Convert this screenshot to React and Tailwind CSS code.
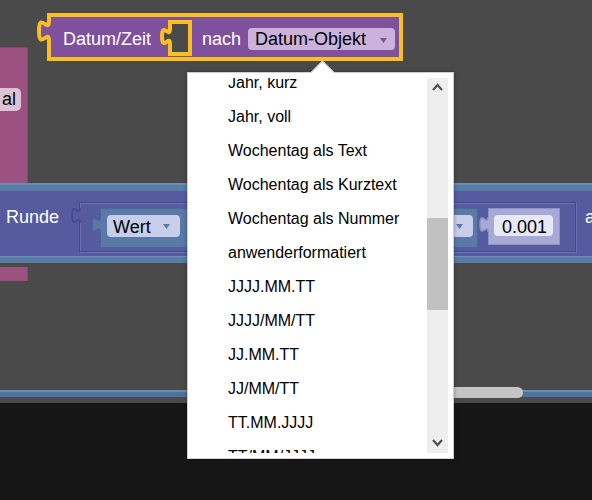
const Tri = ({ color, className = "" }) => (
  <svg className={className} width="7" height="5">
    <polygon points="0,0 7,0 3.5,5" fill={color} />
  </svg>
);

const Tab = ({ className, fill, stroke, sw = 1.5 }) => (
  <svg className={className} width="16" height="22">
    <path d="M12 3 c 0 10 -8 -8 -8 7.5 s 8 -2.5 8 7.5 H15 V3 Z" fill={fill} />
    <path d="M12 3 c 0 10 -8 -8 -8 7.5 s 8 -2.5 8 7.5" fill="none" stroke={stroke} strokeWidth={sw} />
  </svg>
);

export default function App() {
  const items = [
    "Jahr, kurz",
    "Jahr, voll",
    "Wochentag als Text",
    "Wochentag als Kurztext",
    "Wochentag als Nummer",
    "anwenderformatiert",
    "JJJJ.MM.TT",
    "JJJJ/MM/TT",
    "JJ.MM.TT",
    "JJ/MM/TT",
    "TT.MM.JJJJ",
    "TT/MM/JJJJ",
  ];
  const Y = "#f8c022";
  return (
    <div className="relative w-[592px] h-[500px] overflow-hidden font-['Liberation_Sans',Arial,sans-serif]">
      <div className="flex flex-col h-full">
        <div className="h-[403px] bg-[#4a4a4a]" />
        <div className="flex-1 bg-[#161616]" />
      </div>

      {/* bottom blue band + horizontal scrollbar */}
      <div className="absolute left-0 top-[390px] w-full h-[7px] bg-[#4d74a0] border-t-2 border-[#6a8cb3]" />
      <div className="absolute left-[400px] top-[387px] w-[123px] h-[11px] rounded-full bg-[#c4c4c4]" />

      {/* magenta block on the left */}
      <div className="absolute left-0 top-[47px] w-[28px] h-[139px] bg-[#9c5180] border-r border-t border-[#8a4672] rounded-tr-[2px]">
        <div className="absolute left-[-30px] top-[40px] w-[51px] h-[23px] rounded-[5px] bg-[#dcc3d3] flex justify-end pr-[5px] pt-[2px]">
          <span className="text-[18px] leading-none text-black">al</span>
        </div>
      </div>
      <div className="absolute left-0 top-[267px] w-[28px] h-[14px] bg-[#9c5180] border-r border-[#8a4672]" />

      {/* Runde block */}
      <div className="absolute left-0 top-[183px] w-full flex flex-col">
        <div className="h-[8px] bg-[#587ca4] border-t-2 border-[#6d8fb6]" />
        <div className="h-[65px] bg-[#565ba0] flex items-start">
          <span className="ml-[6px] mt-[17px] w-[73px] shrink-0 text-[18px] leading-none text-white">Runde</span>
          <div className="relative mt-[11px] w-[497px] h-[50px] shrink-0 border border-[#44498a] shadow-[inset_1px_1px_0_#6c71b3,1px_1px_0_#6c71b3] flex items-start">
            <svg className="absolute left-[-14px] top-[2px]" width="18" height="22">
              <path d="M14 3 c 0 10 -8 -8 -8 7.5 s 8 -2.5 8 7.5 H17 V3 Z" fill="#565ba0" />
              <path d="M14 3 c 0 10 -8 -8 -8 7.5 s 8 -2.5 8 7.5" fill="none" stroke="#44498a" strokeWidth="1.5" />
            </svg>
            {/* Wert block */}
            <div className="relative ml-[20px] mt-[5px] w-[378px] h-[40px] shrink-0 bg-[#5a79a7] border border-[#4a6694] flex items-start">
              <Tab className="absolute left-[-13px] top-[5px]" fill="#5a79a7" stroke="#4a6694" />
              <div className="ml-[6px] mt-[6px] w-[73px] h-[22px] shrink-0 rounded-[4px] bg-[#c6cee9] flex items-start pt-[3px] pl-[6px]">
                <span className="text-[18px] leading-none text-black">Wert</span>
                <Tri color="#5a79a7" className="ml-[12px] mt-[6px]" />
              </div>
              <div className="ml-[220px] mt-[6px] w-[73px] h-[22px] shrink-0 rounded-[4px] bg-[#c6cee9] flex items-start justify-end pr-[10px] pt-[9px]">
                <Tri color="#5a79a7" />
              </div>
            </div>
            {/* number block */}
            <div className="relative ml-[10px] mt-[5px] w-[72px] h-[37px] shrink-0 bg-[#a7aad6] border border-[#8f92c4]">
              <Tab className="absolute left-[-13px] top-[5px]" fill="#a7aad6" stroke="#8f92c4" />
              <div className="ml-[5px] mt-[6px] w-[59px] h-[21px] rounded-[4px] bg-[#e7e8f5] pt-[3px] pl-[8px]">
                <span className="block text-[18px] leading-none text-black">0.001</span>
              </div>
            </div>
          </div>
          <span className="ml-[9px] mt-[17px] shrink-0 text-[18px] leading-none text-white">a</span>
        </div>
        <div className="h-[7px] bg-[#587ca4] border-t border-[#6d8fb6]" />
      </div>

      {/* Datum/Zeit block (selected) */}
      <div className="absolute left-[47px] top-[13px] w-[356px] h-[48px] border-4 border-[#f8c022] bg-[#7f519d] flex items-start">
        <svg className="absolute left-[-17px] top-[-1px]" width="24" height="30">
          <path d="M15 5 c 0 13 -10 -10 -10 10 s 10 -3 10 10 H19 V5 Z" fill="#7f519d" />
          <path d="M15 5 c 0 13 -10 -10 -10 10 s 10 -3 10 10" fill="none" stroke={Y} strokeWidth="4" />
        </svg>
        <span className="ml-[12px] mt-[13px] w-[105px] shrink-0 text-[18px] leading-none text-white">Datum/Zeit</span>
        <div className="relative mt-[3px] w-[24px] h-[36px] shrink-0 border-4 border-[#f8c022] bg-[#4a4a4a]">
          <svg className="absolute left-[-17px] top-[1px]" width="22" height="24">
            <path d="M15 4 c 0 10 -8 -8 -8 7.5 s 8 -2.5 8 7.5 H19 V4 Z" fill="#4a4a4a" />
            <path d="M15 4 c 0 10 -8 -8 -8 7.5 s 8 -2.5 8 7.5" fill="none" stroke={Y} strokeWidth="4" />
          </svg>
        </div>
        <span className="ml-[10px] mt-[13px] w-[46px] shrink-0 text-[18px] leading-none text-white">nach</span>
        <div className="mt-[11px] w-[147px] h-[22px] shrink-0 rounded-[4px] bg-[#cab2dc] flex items-start pt-[2px] pl-[7px]">
          <span className="text-[18px] leading-none text-black">Datum-Objekt</span>
          <Tri color="#7f519d" className="ml-[14px] mt-[8px]" />
        </div>
      </div>

      {/* dropdown */}
      <div className="absolute left-[187px] top-[72px] w-[267px] h-[387px] bg-white border border-[#cfcfcf] shadow-[0_0_4px_rgba(0,0,0,0.35)] flex pt-[5px] pb-[5px] pr-[5px]">
        <div className="flex-1 overflow-hidden">
          <div className="flex flex-col mt-[-12px]">
            {items.map((t) => (
              <div key={t} className="h-[34px] shrink-0 flex items-center pl-[40px] text-[16px] text-black whitespace-nowrap">
                {t}
              </div>
            ))}
          </div>
        </div>
        <div className="w-[21px] bg-[#eeeeee] flex flex-col">
          <div className="h-[18px] flex items-center justify-center">
            <svg width="11" height="8">
              <polyline points="1,7 5.5,2 10,7" fill="none" stroke="#505050" strokeWidth="2.2" />
            </svg>
          </div>
          <div className="h-[122px]" />
          <div className="h-[92px] bg-[#c1c1c1]" />
          <div className="flex-1" />
          <div className="h-[20px] flex items-center justify-center">
            <svg width="11" height="8">
              <polyline points="1,1 5.5,6 10,1" fill="none" stroke="#505050" strokeWidth="2.2" />
            </svg>
          </div>
        </div>
      </div>
      <div className="absolute left-[313.5px] top-[63.5px] w-[17px] h-[17px] rotate-45 bg-white border-t border-l border-[#cfcfcf]" />
    </div>
  );
}
